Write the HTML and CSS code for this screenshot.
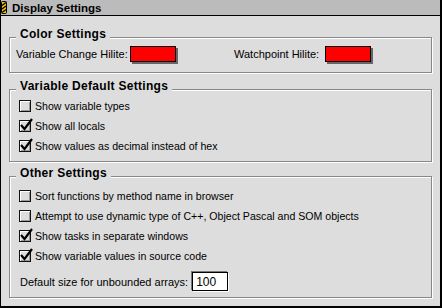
FILE: index.html
```html
<!DOCTYPE html>
<html lang="en">

<head>
    <meta charset="UTF-8">
    <title>Display Settings</title>
    <link rel="stylesheet" href="styles.css">
</head>

<body>
    <div class="window">
        <div class="titlebar">
            <svg class="grip" width="6" height="13" viewBox="0 0 6 13">
                <rect x="0.5" y="0.5" width="5" height="12" rx="1" fill="#f5c400" stroke="#000" />
                <path d="M1 4.5 L5 1.5 M1 8 L5 5 M1 11.5 L5 8.5" stroke="#000" stroke-width="1.4" />
            </svg>
            <span class="title">Display Settings</span>
        </div>

        <div class="content">
            <div class="group group-color">
                <div class="group-title">Color Settings</div>
                <div class="color-row">
                    <div class="color-pair">
                        <span>Variable Change Hilite:</span>
                        <span class="swatch"></span>
                    </div>
                    <div class="color-pair">
                        <span>Watchpoint Hilite:</span>
                        <span class="swatch"></span>
                    </div>
                </div>
            </div>

            <div class="group group-vars">
                <div class="group-title">Variable Default Settings</div>
                <div class="check-row first-row">
                    <span class="check"></span>Show variable types
                </div>
                <div class="check-row">
                    <span class="check checked">
                        <svg viewBox="0 -2 16 15"><polyline points="2,5 5.5,9 13,-1" /></svg>
                    </span>Show all locals
                </div>
                <div class="check-row">
                    <span class="check checked">
                        <svg viewBox="0 -2 16 15"><polyline points="2,5 5.5,9 13,-1" /></svg>
                    </span>Show values as decimal instead of hex
                </div>
            </div>

            <div class="group group-other">
                <div class="group-title">Other Settings</div>
                <div class="check-row first-row">
                    <span class="check"></span>Sort functions by method name in browser
                </div>
                <div class="check-row">
                    <span class="check"></span>Attempt to use dynamic type of C++, Object Pascal and SOM objects
                </div>
                <div class="check-row">
                    <span class="check checked">
                        <svg viewBox="0 -2 16 15"><polyline points="2,5 5.5,9 13,-1" /></svg>
                    </span>Show tasks in separate windows
                </div>
                <div class="check-row">
                    <span class="check checked">
                        <svg viewBox="0 -2 16 15"><polyline points="2,5 5.5,9 13,-1" /></svg>
                    </span>Show variable values in source code
                </div>
                <div class="default-row">
                    <label for="arraySize">Default size for unbounded arrays:</label>
                    <input type="text" id="arraySize" class="num-field" value="100">
                </div>
            </div>
        </div>
    </div>
</body>

</html>
```

FILE: styles.css
```css
body {
    margin: 0;
    font-family: "Liberation Sans", Arial, sans-serif;
    font-size: 11px;
    color: #000;
    background: #fff;
}

.window {
    width: 439px;
    height: 306px;
    border-left: 1px solid #000;
    border-right: 2px solid #000;
    border-bottom: 2px solid #000;
    background: #ddd;
}

.titlebar {
    height: 15px;
    border-bottom: 1px solid #000;
    background: #bbb;
    display: flex;
    align-items: center;
}

.grip {
    flex: none;
}

.title {
    font-weight: bold;
    font-size: 11.5px;
    margin-left: 5px;
}

.content {
    padding: 21px 8px 0 8px;
}

.group {
    border: 1px solid #888;
    box-shadow: inset 1px 1px 0 #fff, 1px 1px 0 #fff;
}

.group-title {
    width: max-content;
    margin: -10px 0 0 6px;
    padding: 0 4px;
    background: #ddd;
    font-weight: bold;
    font-size: 12px;
    line-height: 12px;
    letter-spacing: 0.3px;
}

/* color settings */
.group-color {
    padding-bottom: 10px;
}

.color-row {
    display: flex;
    align-items: center;
    height: 16px;
    margin-top: 6px;
    padding-left: 6px;
}

.color-pair {
    display: flex;
    align-items: center;
    gap: 2px;
}

.color-pair:first-child {
    width: 218px;
}

.color-pair:last-child {
    gap: 6px;
}

.swatch {
    width: 46px;
    height: 16px;
    box-sizing: border-box;
    border: 1px solid #000;
    background: #f00;
    box-shadow: 2px 2px 0 #666;
}

/* checkbox groups */
.group-vars {
    margin-top: 16px;
    padding-bottom: 5px;
}

.group-vars .first-row {
    margin-top: 4px;
}

.group-other {
    margin-top: 14px;
    padding-bottom: 6px;
}

.group-other .first-row {
    margin-top: 7px;
}

.check-row {
    display: flex;
    align-items: center;
    gap: 4px;
    height: 20px;
    padding-left: 9px;
    font-size: 10.6px;
}

.check {
    position: relative;
    flex: none;
    width: 12px;
    height: 12px;
    box-sizing: border-box;
    border: 1px solid #111;
    background: #ddd;
    box-shadow: inset 1px 1px 0 #fff, inset -1px -1px 0 #999;
}

.check svg {
    position: absolute;
    left: -1px;
    top: -3px;
    width: 16px;
    height: 15px;
    overflow: visible;
}

.check polyline {
    fill: none;
    stroke: #000;
    stroke-width: 2.2;
}

.default-row {
    display: flex;
    align-items: center;
    gap: 4px;
    height: 19px;
    margin-top: 6px;
    padding-left: 10px;
}

.num-field {
    width: 36px;
    height: 19px;
    box-sizing: border-box;
    margin: 0;
    padding: 0 0 0 3px;
    border: 1px solid #000;
    background: #fff;
    box-shadow: -1px -1px 0 #777, 1px 1px 0 #fff;
    font: inherit;
    font-size: 12px;
    color: #000;
    outline: none;
}
```
